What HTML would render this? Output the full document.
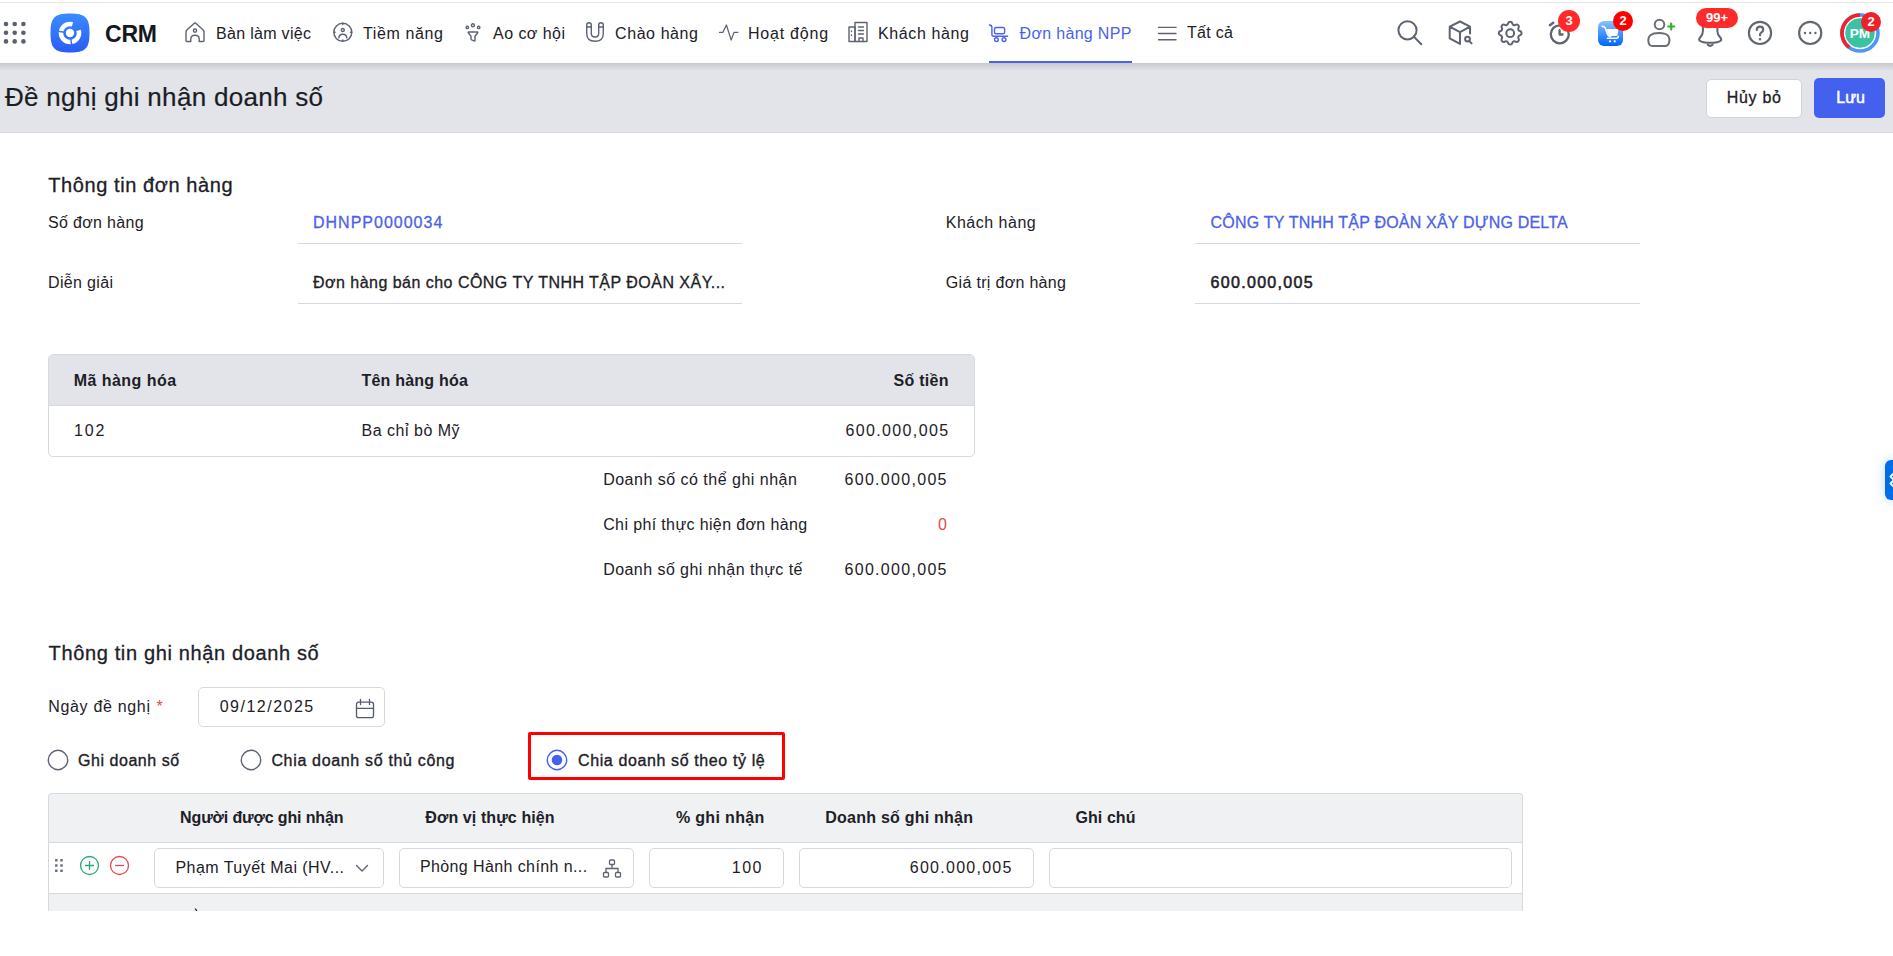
<!DOCTYPE html><html><head><meta charset="utf-8"><style>
html,body{margin:0;padding:0;width:1893px;height:956px;overflow:hidden;background:#fff;}
body{position:relative;font-family:"Liberation Sans",sans-serif;}
.t{position:absolute;white-space:nowrap;line-height:1;}
</style></head><body>
<div style="position:absolute;left:0px;top:2px;width:1893px;height:1px;background:#e2e5e2"></div>
<div style="position:absolute;left:0px;top:63px;width:1893px;height:70px;background:#e3e4e9"></div>
<div style="position:absolute;left:0px;top:63px;width:1893px;height:8px;background:linear-gradient(#c6c8ce,#e3e4e9)"></div>
<div style="position:absolute;left:0px;top:132px;width:1893px;height:1px;background:#d3d7df"></div>
<svg style="position:absolute;left:0px;top:0px" width="40" height="60" viewBox="0 0 40 60" fill="none"><circle cx="6.0" cy="24.0" r="2.3" fill="#5a6070"/><circle cx="6.0" cy="32.7" r="2.3" fill="#5a6070"/><circle cx="6.0" cy="41.4" r="2.3" fill="#5a6070"/><circle cx="14.7" cy="24.0" r="2.3" fill="#5a6070"/><circle cx="14.7" cy="32.7" r="2.3" fill="#5a6070"/><circle cx="14.7" cy="41.4" r="2.3" fill="#5a6070"/><circle cx="23.4" cy="24.0" r="2.3" fill="#5a6070"/><circle cx="23.4" cy="32.7" r="2.3" fill="#5a6070"/><circle cx="23.4" cy="41.4" r="2.3" fill="#5a6070"/></svg>
<svg style="position:absolute;left:50px;top:13px" width="40" height="40" viewBox="0 0 40 40" fill="none"><defs><linearGradient id="lg" x1="0" y1="0" x2="0" y2="1"><stop offset="0" stop-color="#3a8cff"/><stop offset="1" stop-color="#2a5cf6"/></linearGradient>
<mask id="lm" maskUnits="userSpaceOnUse" x="0" y="0" width="40" height="40"><rect width="40" height="40" fill="#fff"/>
<path d="M20 20 L4.16 17.77" stroke="#000" stroke-width="1.4"/><path d="M20 20 L22.23 35.84" stroke="#000" stroke-width="1.4"/>
<path d="M20 20 L24.4 4.5 L35.5 15.2 Z" fill="#000"/></mask></defs>
<path d="M20 0.5 C35.5 0.5 39.5 4.5 39.5 20 C39.5 35.5 35.5 39.5 20 39.5 C4.5 39.5 0.5 35.5 0.5 20 C0.5 4.5 4.5 0.5 20 0.5 Z" fill="url(#lg)"/>
<circle cx="20" cy="20" r="9.05" stroke="#fff" stroke-width="4.5" mask="url(#lm)"/>
<circle cx="20" cy="20" r="4.2" fill="#fff"/></svg>
<div class="t" style="left:105.00px;top:23px;font-size:23px;color:#151820;letter-spacing:-0.200px;font-weight:700;">CRM</div>
<div class="t" style="left:216.00px;top:26px;font-size:16px;color:#1d2027;letter-spacing:0.309px;">Bàn làm việc</div>
<div class="t" style="left:363.00px;top:26px;font-size:16px;color:#1d2027;letter-spacing:0.625px;">Tiềm năng</div>
<div class="t" style="left:493.00px;top:26px;font-size:16px;color:#1d2027;letter-spacing:0.463px;">Ao cơ hội</div>
<div class="t" style="left:615.00px;top:26px;font-size:16px;color:#1d2027;letter-spacing:0.588px;">Chào hàng</div>
<div class="t" style="left:748.00px;top:26px;font-size:16px;color:#1d2027;letter-spacing:0.775px;">Hoạt động</div>
<div class="t" style="left:878.00px;top:26px;font-size:16px;color:#1d2027;letter-spacing:0.622px;">Khách hàng</div>
<div class="t" style="left:1019.60px;top:26px;font-size:16px;color:#4a62e8;letter-spacing:0.309px;">Đơn hàng NPP</div>
<div class="t" style="left:1187.00px;top:25px;font-size:16px;color:#1d2027;letter-spacing:0.300px;">Tất cả</div>
<div style="position:absolute;left:989px;top:61px;width:143px;height:2px;background:#4a62e8"></div>
<svg style="position:absolute;left:184px;top:21px" width="22" height="22" viewBox="0 0 22 22" fill="none"><path d="M2 19.5 V10.8 Q2 9.8 2.8 9.1 L10 2.4 Q11 1.6 12 2.4 L19.2 9.1 Q20 9.8 20 10.8 V19.5 Q20 20.5 19 20.5 H15.2 V18 Q15.2 14.2 11 14.2 Q6.8 14.2 6.8 18 V20.5 H3 Q2 20.5 2 19.5Z" stroke="#5d6373" stroke-width="1.4" stroke-linecap="round" stroke-linejoin="round"/><circle cx="11" cy="9.6" r="1.6" stroke="#5d6373" stroke-width="1.4" stroke-linecap="round" stroke-linejoin="round"/></svg>
<svg style="position:absolute;left:332px;top:22px" width="21" height="21" viewBox="0 0 21 21" fill="none"><circle cx="10.8" cy="10.3" r="9" stroke="#5d6373" stroke-width="1.4" stroke-linecap="round" stroke-linejoin="round"/><circle cx="10.8" cy="8" r="1.5" stroke="#5d6373" stroke-width="1.4" stroke-linecap="round" stroke-linejoin="round"/><path d="M6.8 15.8 Q7.3 12.2 10.8 12.2 Q14.3 12.2 14.8 15.8" stroke="#5d6373" stroke-width="1.4" stroke-linecap="round" stroke-linejoin="round"/><path d="M10.8 1.3V2.6M10.8 18V19.3M1.8 10.3H3.1M18.5 10.3H19.8" stroke="#5d6373" stroke-width="1.4" stroke-linecap="round" stroke-linejoin="round"/></svg>
<svg style="position:absolute;left:464px;top:21px" width="20" height="22" viewBox="0 0 20 22" fill="none"><circle cx="3.3" cy="6.4" r="1.2" stroke="#5d6373" stroke-width="1.4" stroke-linecap="round" stroke-linejoin="round"/><circle cx="8.9" cy="4.3" r="1.5" stroke="#5d6373" stroke-width="1.4" stroke-linecap="round" stroke-linejoin="round"/><circle cx="14.7" cy="6.4" r="1.2" stroke="#5d6373" stroke-width="1.4" stroke-linecap="round" stroke-linejoin="round"/><path d="M4.6 11 H13.4 Q14.2 11 13.7 11.7 L11 15.2 V19.3 Q11 20.2 10.2 19.9 L7.6 18.8 Q7 18.5 7 17.8 V15.2 L4.3 11.7 Q3.8 11 4.6 11 Z" stroke="#5d6373" stroke-width="1.4" stroke-linecap="round" stroke-linejoin="round"/></svg>
<svg style="position:absolute;left:585px;top:21px" width="20" height="22" viewBox="0 0 20 22" fill="none"><path d="M1.7 4 Q1.7 1.7 4 1.7 Q6.3 1.7 6.3 4 V12.5 Q6.3 16 10 16 Q13.7 16 13.7 12.5 V4 Q13.7 1.7 16 1.7 Q18.3 1.7 18.3 4 V12.5 Q18.3 20.3 10 20.3 Q1.7 20.3 1.7 12.5 Z" stroke="#5d6373" stroke-width="1.4" stroke-linecap="round" stroke-linejoin="round"/><path d="M1.7 6H6.3M13.7 6H18.3" stroke="#5d6373" stroke-width="1.4" stroke-linecap="round" stroke-linejoin="round"/></svg>
<svg style="position:absolute;left:718px;top:24px" width="22" height="18" viewBox="0 0 22 18" fill="none"><path d="M1.5 8.4 H4.8 L8.4 1 L13.2 16 L16 8.4 H19.8" stroke="#5d6373" stroke-width="1.25" stroke-linecap="round" stroke-linejoin="round"/></svg>
<svg style="position:absolute;left:847px;top:21px" width="22" height="22" viewBox="0 0 22 22" fill="none"><rect x="2" y="6" width="6" height="14.5" stroke="#5d6373" stroke-width="1.4" stroke-linecap="round" stroke-linejoin="round"/><rect x="8" y="1.5" width="12" height="19" stroke="#5d6373" stroke-width="1.4" stroke-linecap="round" stroke-linejoin="round"/><path d="M11.5 6H16.5M11.5 9.5H16.5M11.5 13H16.5M4.5 10V10.5M4.5 14V14.5M12 20.5V17H16V20.5" stroke="#5d6373" stroke-width="1.4" stroke-linecap="round" stroke-linejoin="round"/></svg>
<svg style="position:absolute;left:988px;top:23px" width="22" height="20" viewBox="0 0 22 20" fill="none"><path d="M1.4 2 Q3.9 2 3.9 4.5 V11.2 Q3.9 13.2 5.9 13.2 H19.6" stroke="#4a62e8" stroke-width="1.4" stroke-linecap="round" stroke-linejoin="round"/><rect x="6.5" y="4.5" width="10.1" height="6.2" rx="1.5" stroke="#4a62e8" stroke-width="1.4" stroke-linecap="round" stroke-linejoin="round"/><circle cx="8.4" cy="16.6" r="1.9" stroke="#4a62e8" stroke-width="1.4" stroke-linecap="round" stroke-linejoin="round"/><circle cx="16" cy="16.6" r="1.9" stroke="#4a62e8" stroke-width="1.4" stroke-linecap="round" stroke-linejoin="round"/></svg>
<svg style="position:absolute;left:1157px;top:24px" width="21" height="18" viewBox="0 0 21 18" fill="none"><path d="M1.5 3.4H19M1.5 9.5H19M1.5 15.8H19" stroke="#5d6373" stroke-width="1.4" stroke-linecap="round" stroke-linejoin="round"/></svg>
<svg style="position:absolute;left:1394px;top:17px" width="32" height="32" viewBox="0 0 32 32" fill="none"><circle cx="13.5" cy="13.3" r="9.1" stroke="#5d6373" stroke-width="2" stroke-linecap="round" stroke-linejoin="round"/><path d="M19.8 19.6 L27.3 27.3" stroke="#5d6373" stroke-width="2" stroke-linecap="round" stroke-linejoin="round"/></svg>
<svg style="position:absolute;left:1446px;top:18px" width="30" height="30" viewBox="0 0 30 30" fill="none"><path d="M14 3.5 L24 8.7 V15.4 M14 3.5 L3.7 8.7 V20.4 L14 25.9 M3.7 8.7 L14 14.2 L24 8.7 M14 14.2 V25.9" stroke="#5d6373" stroke-width="2" stroke-linecap="round" stroke-linejoin="round"/><circle cx="21.5" cy="21.1" r="2.4" stroke="#5d6373" stroke-width="2" stroke-linecap="round" stroke-linejoin="round"/><path d="M23.4 23.2 L25.6 25.4" stroke="#5d6373" stroke-width="2" stroke-linecap="round" stroke-linejoin="round"/></svg>
<svg style="position:absolute;left:1494.7px;top:17.7px" width="30.4" height="30.4" viewBox="0 0 24 24" fill="none"><path d="M10.325 4.317c.426 -1.756 2.924 -1.756 3.35 0a1.724 1.724 0 0 0 2.573 1.066c1.543 -.94 3.31 .826 2.37 2.37a1.724 1.724 0 0 0 1.065 2.572c1.756 .426 1.756 2.924 0 3.35a1.724 1.724 0 0 0 -1.066 2.573c.94 1.543 -.826 3.31 -2.37 2.37a1.724 1.724 0 0 0 -2.572 1.065c-.426 1.756 -2.924 1.756 -3.35 0a1.724 1.724 0 0 0 -2.573 -1.066c-1.543 .94 -3.31 -.826 -2.37 -2.37a1.724 1.724 0 0 0 -1.065 -2.572c-1.756 -.426 -1.756 -2.924 0 -3.35a1.724 1.724 0 0 0 1.066 -2.573c-.94 -1.543 .826 -3.31 2.37 -2.37c1 .608 2.296 .07 2.572 -1.065z" stroke="#5d6373" stroke-width="1.6" stroke-linejoin="round"/><circle cx="12" cy="12" r="3.05" stroke="#5d6373" stroke-width="1.6"/></svg>
<svg style="position:absolute;left:1546px;top:18px" width="28" height="30" viewBox="0 0 28 30" fill="none"><circle cx="13.8" cy="16.3" r="9" stroke="#5d6373" stroke-width="2.3"/><path d="M13.6 12.2 V16.5 H16.6" stroke="#5d6373" stroke-width="2.3" stroke-linecap="round" stroke-linejoin="round"/><path d="M3.8 7.2 L7.3 4.7" stroke="#5d6373" stroke-width="2.3" stroke-linecap="round"/></svg>
<div style="position:absolute;left:1558px;top:10px;width:22px;height:22px;border-radius:11px;background:#ff2b2b;color:#fff;font:700 13px/22px 'Liberation Sans',sans-serif;text-align:center">3</div>
<svg style="position:absolute;left:1598px;top:21px" width="25" height="25" viewBox="0 0 25 25" fill="none"><defs><linearGradient id="cg" x1="0" y1="0" x2="0" y2="1"><stop offset="0" stop-color="#8cc2ff"/><stop offset="1" stop-color="#0064fa"/></linearGradient></defs>
<rect width="25" height="25" rx="6" fill="url(#cg)"/>
<path d="M8.6 8 H20.4 L19.6 14.2 Q19.5 15 18.7 15 H11.5 Q10.8 15 10.6 14.3 Z" fill="#fff"/>
<path d="M4.2 5.4 Q6.5 5.2 7.4 7.3 L9.5 13 Q10.3 15.4 12.5 15.4 M9.5 17.2 H18.8 Q20.4 17.2 20.4 15.6" stroke="#fff" stroke-width="1.6" stroke-linecap="round" stroke-linejoin="round" fill="none"/>
<circle cx="12" cy="20.3" r="1.15" fill="#fff"/><circle cx="16.7" cy="20.3" r="1.15" fill="#fff"/></svg>
<div style="position:absolute;left:1613px;top:11px;width:20px;height:20px;border-radius:10px;background:#ff0000;color:#fff;font:700 13px/20px 'Liberation Sans',sans-serif;text-align:center">2</div>
<svg style="position:absolute;left:1646px;top:17px" width="32" height="32" viewBox="0 0 32 32" fill="none"><circle cx="13.5" cy="7.5" r="4.8" stroke="#6b6e72" stroke-width="2"/><path d="M2.5 25 Q1 16 13.2 16 Q24.8 16 23.2 25 Q22.5 29 19 29 H6.5 Q3 29 2.5 25 Z" stroke="#6b6e72" stroke-width="2" stroke-linejoin="round"/><path d="M25.2 6.5 V12.5 M22.2 9.5 H28.2" stroke="#2ab52a" stroke-width="2.2" stroke-linecap="round"/></svg>
<svg style="position:absolute;left:1696px;top:20px" width="28" height="30" viewBox="0 0 28 30" fill="none"><path d="M6.9 6 V11 Q6.9 14.5 4.5 17 Q2.5 19 3.5 20.5 Q6 22.8 14.2 22.8 Q22.4 22.8 24.9 20.5 Q25.9 19 23.9 17 Q21.4 14.5 21.4 11 V6" stroke="#5d6373" stroke-width="2" stroke-linecap="round" stroke-linejoin="round"/><path d="M11.8 24.8 Q14.2 27 16.6 24.8" stroke="#5d6373" stroke-width="2" stroke-linecap="round" stroke-linejoin="round"/></svg>
<div style="position:absolute;left:1696px;top:8px;width:42px;height:20px;border-radius:10px;background:#ff2b2b;color:#fff;font:700 13px/20px 'Liberation Sans',sans-serif;text-align:center">99+</div>
<svg style="position:absolute;left:1746px;top:19px" width="28" height="28" viewBox="0 0 28 28" fill="none"><circle cx="14" cy="13.9" r="11.1" stroke="#62686f" stroke-width="2.2" stroke-linecap="round" stroke-linejoin="round"/><path d="M10.8 11 Q10.8 7.6 14 7.6 Q17.2 7.6 17.2 10.6 Q17.2 12.4 15.4 13.4 Q14 14.2 14 16.3" stroke="#62686f" stroke-width="2.2" stroke-linecap="round" stroke-linejoin="round"/><circle cx="14" cy="20.2" r="0.5" fill="#62686f" stroke="#62686f" stroke-width="1.6"/></svg>
<svg style="position:absolute;left:1796px;top:19px" width="28" height="28" viewBox="0 0 28 28" fill="none"><circle cx="14.2" cy="13.9" r="11.1" stroke="#62686f" stroke-width="2.2" stroke-linecap="round" stroke-linejoin="round"/><circle cx="9" cy="14" r="1.2" fill="#62686f"/><circle cx="14.2" cy="14" r="1.2" fill="#62686f"/><circle cx="19.4" cy="14" r="1.2" fill="#62686f"/></svg>
<svg style="position:absolute;left:1839px;top:12px" width="42" height="42" viewBox="0 0 42 42" fill="none"><circle cx="21" cy="21" r="18" stroke="#4a97f7" stroke-width="3.6"/>
<path d="M21 3 A18 18 0 0 0 10.3 35.5" stroke="#f0232c" stroke-width="3.6"/>
<circle cx="21" cy="21" r="15.3" fill="#3cc2a2" stroke="#fff" stroke-width="0.9"/>
<text x="20.9" y="26.1" text-anchor="middle" font-family="Liberation Sans" font-weight="700" font-size="13.5" fill="#fff">PM</text></svg>
<div style="position:absolute;left:1861px;top:12px;width:20px;height:20px;border-radius:10px;background:#f0202a;color:#fff;font:700 13px/20px 'Liberation Sans',sans-serif;text-align:center">2</div>
<div class="t" style="left:5.00px;top:84px;font-size:26px;color:#1a1d24;letter-spacing:0.300px;-webkit-text-stroke:0.2px #1a1d24;">Đề nghị ghi nhận doanh số</div>
<div style="position:absolute;left:1706px;top:78.5px;width:96px;height:39px;background:#fff;border:1px solid #d0d3d9;border-radius:5px;box-sizing:border-box;"></div>
<div class="t" style="left:1726.70px;top:90px;font-size:16px;color:#1d2027;letter-spacing:0.720px;-webkit-text-stroke:0.3px #1d2027;">Hủy bỏ</div>
<div style="position:absolute;left:1814px;top:78px;width:71px;height:40px;background:#4361ee;border-radius:5px;"></div>
<div class="t" style="left:1836.30px;top:90px;font-size:16px;color:#fff;letter-spacing:0.000px;-webkit-text-stroke:0.5px #fff;">Lưu</div>
<div class="t" style="left:48.20px;top:175px;font-size:20px;color:#1d2027;letter-spacing:0.588px;-webkit-text-stroke:0.3px #1d2027;">Thông tin đơn hàng</div>
<div class="t" style="left:48.00px;top:215px;font-size:16px;color:#1d2027;letter-spacing:0.320px;">Số đơn hàng</div>
<div class="t" style="left:313.00px;top:215px;font-size:16px;color:#4a62e8;letter-spacing:1.000px;-webkit-text-stroke:0.3px #4a62e8;">DHNPP0000034</div>
<div style="position:absolute;left:298px;top:243px;width:444px;height:1px;background:#d6d9e0"></div>
<div class="t" style="left:48.00px;top:275px;font-size:16px;color:#1d2027;letter-spacing:0.338px;">Diễn giải</div>
<div class="t" style="left:313.00px;top:275px;font-size:16px;color:#1d2027;letter-spacing:0.475px;-webkit-text-stroke:0.3px #1d2027;">Đơn hàng bán cho CÔNG TY TNHH TẬP ĐOÀN XÂY...</div>
<div style="position:absolute;left:298px;top:303px;width:444px;height:1px;background:#d6d9e0"></div>
<div class="t" style="left:945.80px;top:215px;font-size:16px;color:#1d2027;letter-spacing:0.500px;">Khách hàng</div>
<div class="t" style="left:1210.60px;top:215px;font-size:16px;color:#4a62e8;letter-spacing:0.203px;-webkit-text-stroke:0.3px #4a62e8;">CÔNG TY TNHH TẬP ĐOÀN XÂY DỰNG DELTA</div>
<div style="position:absolute;left:1195px;top:243px;width:445px;height:1px;background:#d6d9e0"></div>
<div class="t" style="left:945.80px;top:275px;font-size:16px;color:#1d2027;letter-spacing:0.313px;">Giá trị đơn hàng</div>
<div class="t" style="left:1210.60px;top:275px;font-size:16px;color:#1d2027;letter-spacing:1.300px;-webkit-text-stroke:0.55px #1d2027;">600.000,005</div>
<div style="position:absolute;left:1195px;top:303px;width:445px;height:1px;background:#d6d9e0"></div>
<div style="position:absolute;left:48px;top:354px;width:927px;height:103px;border:1px solid #d6d9e0;border-radius:5px;box-sizing:border-box;overflow:hidden;background:#fff"></div>
<div style="position:absolute;left:49px;top:355px;width:925px;height:50px;background:#e3e4e9;border-radius:4px 4px 0 0"></div>
<div style="position:absolute;left:49px;top:405px;width:925px;height:1px;background:#d6d9e0"></div>
<div class="t" style="left:73.70px;top:373px;font-size:16px;color:#1d2027;letter-spacing:0.460px;font-weight:700;">Mã hàng hóa</div>
<div class="t" style="left:361.50px;top:373px;font-size:16px;color:#1d2027;letter-spacing:0.218px;font-weight:700;">Tên hàng hóa</div>
<div class="t" style="left:893.60px;top:373px;font-size:16px;color:#1d2027;letter-spacing:0.250px;font-weight:700;">Số tiền</div>
<div class="t" style="left:74.00px;top:423px;font-size:16px;color:#1d2027;letter-spacing:1.900px;">102</div>
<div class="t" style="left:361.50px;top:423px;font-size:16px;color:#1d2027;letter-spacing:0.509px;">Ba chỉ bò Mỹ</div>
<div class="t" style="left:845.50px;top:423px;font-size:16px;color:#1d2027;letter-spacing:1.360px;">600.000,005</div>
<div class="t" style="left:603.20px;top:472px;font-size:16px;color:#1d2027;letter-spacing:0.491px;">Doanh số có thể ghi nhận</div>
<div class="t" style="left:844.50px;top:472px;font-size:16px;color:#1d2027;letter-spacing:1.300px;">600.000,005</div>
<div class="t" style="left:603.20px;top:517px;font-size:16px;color:#1d2027;letter-spacing:0.372px;">Chi phí thực hiện đơn hàng</div>
<div class="t" style="left:938.00px;top:517px;font-size:16px;color:#e5484d;letter-spacing:0.000px;">0</div>
<div class="t" style="left:603.20px;top:562px;font-size:16px;color:#1d2027;letter-spacing:0.442px;">Doanh số ghi nhận thực tế</div>
<div class="t" style="left:844.50px;top:562px;font-size:16px;color:#1d2027;letter-spacing:1.300px;">600.000,005</div>
<div class="t" style="left:48.60px;top:643px;font-size:20px;color:#1d2027;letter-spacing:0.635px;-webkit-text-stroke:0.3px #1d2027;">Thông tin ghi nhận doanh số</div>
<div class="t" style="left:48.20px;top:699px;font-size:16px;color:#1d2027;letter-spacing:0.682px;">Ngày đề nghị</div>
<div class="t" style="left:156.40px;top:699px;font-size:16px;color:#e5484d;letter-spacing:0.000px;">*</div>
<div style="position:absolute;left:198px;top:687px;width:187px;height:40px;border:1px solid #d6d9e0;border-radius:5px;box-sizing:border-box;background:#fff"></div>
<div class="t" style="left:219.70px;top:699px;font-size:16px;color:#1d2027;letter-spacing:1.500px;">09/12/2025</div>
<svg style="position:absolute;left:355px;top:698px" width="20" height="21" viewBox="0 0 20 21" fill="none"><rect x="1.5" y="4.1" width="17" height="15.5" rx="2.2" stroke="#525a6e" stroke-width="1.3"/><path d="M1.5 10.4H18.5M5.5 1.5V6.5M14.5 1.5V6.5" stroke="#525a6e" stroke-width="1.3" stroke-linecap="round"/></svg>
<svg style="position:absolute;left:47px;top:749px" width="22" height="22" viewBox="0 0 22 22" fill="none"><circle cx="11" cy="11" r="9.7" stroke="#5d6373" stroke-width="1.4" fill="#fff"/></svg>
<div class="t" style="left:78.00px;top:753px;font-size:16px;color:#1d2027;letter-spacing:0.545px;-webkit-text-stroke:0.35px #1d2027;">Ghi doanh số</div>
<svg style="position:absolute;left:240px;top:749px" width="22" height="22" viewBox="0 0 22 22" fill="none"><circle cx="11" cy="11" r="9.7" stroke="#5d6373" stroke-width="1.4" fill="#fff"/></svg>
<div class="t" style="left:271.40px;top:753px;font-size:16px;color:#1d2027;letter-spacing:0.671px;-webkit-text-stroke:0.35px #1d2027;">Chia doanh số thủ công</div>
<div style="position:absolute;left:528px;top:732px;width:257px;height:48px;border:3px solid #ff0000;border-radius:2px;box-sizing:border-box"></div>
<svg style="position:absolute;left:546px;top:749px" width="22" height="22" viewBox="0 0 22 22" fill="none"><circle cx="11" cy="11" r="9.7" stroke="#4361ee" stroke-width="1.4" fill="#fff"/><circle cx="11" cy="11" r="5.3" fill="#4361ee"/></svg>
<div class="t" style="left:578.00px;top:753px;font-size:16px;color:#1d2027;letter-spacing:0.617px;-webkit-text-stroke:0.35px #1d2027;">Chia doanh số theo tỷ lệ</div>
<div style="position:absolute;left:48px;top:793px;width:1475px;height:118px;border:1px solid #d6d9e0;border-bottom:none;border-radius:4px 4px 0 0;box-sizing:border-box;background:#f0f1f3"></div>
<div style="position:absolute;left:49px;top:842px;width:1473px;height:1px;background:#d6d9e0"></div>
<div style="position:absolute;left:49px;top:843px;width:1473px;height:50px;background:#fff"></div>
<div style="position:absolute;left:49px;top:893px;width:1473px;height:1px;background:#d6d9e0"></div>
<div class="t" style="left:180.10px;top:810px;font-size:16px;color:#1d2027;letter-spacing:-0.139px;font-weight:700;">Người được ghi nhận</div>
<div class="t" style="left:425.30px;top:810px;font-size:16px;color:#1d2027;letter-spacing:0.093px;font-weight:700;">Đơn vị thực hiện</div>
<div class="t" style="left:675.90px;top:810px;font-size:16px;color:#1d2027;letter-spacing:0.344px;font-weight:700;">% ghi nhận</div>
<div class="t" style="left:825.30px;top:810px;font-size:16px;color:#1d2027;letter-spacing:0.231px;font-weight:700;">Doanh số ghi nhận</div>
<div class="t" style="left:1075.50px;top:810px;font-size:16px;color:#1d2027;letter-spacing:0.067px;font-weight:700;">Ghi chú</div>
<svg style="position:absolute;left:54px;top:858px" width="10" height="15" viewBox="0 0 10 15" fill="none"><rect x="1.0" y="1.0" width="2.6" height="2.6" rx="0.6" fill="#6b7182"/><rect x="1.0" y="6.2" width="2.6" height="2.6" rx="0.6" fill="#6b7182"/><rect x="1.0" y="11.4" width="2.6" height="2.6" rx="0.6" fill="#6b7182"/><rect x="6.2" y="1.0" width="2.6" height="2.6" rx="0.6" fill="#6b7182"/><rect x="6.2" y="6.2" width="2.6" height="2.6" rx="0.6" fill="#6b7182"/><rect x="6.2" y="11.4" width="2.6" height="2.6" rx="0.6" fill="#6b7182"/></svg>
<svg style="position:absolute;left:79px;top:855px" width="21" height="21" viewBox="0 0 21 21" fill="none"><circle cx="10.5" cy="10.5" r="9" stroke="#2aa876" stroke-width="1.3"/><path d="M10.5 6V15M6 10.5H15" stroke="#2aa876" stroke-width="1.3"/></svg>
<svg style="position:absolute;left:109px;top:855px" width="21" height="21" viewBox="0 0 21 21" fill="none"><circle cx="10.5" cy="10.5" r="9" stroke="#e5484d" stroke-width="1.3"/><path d="M6 10.5H15" stroke="#e5484d" stroke-width="1.3"/></svg>
<div style="position:absolute;left:154px;top:848px;width:230px;height:40px;border:1px solid #d6d9e0;border-radius:5px;box-sizing:border-box;background:#fff"></div>
<div style="position:absolute;left:399px;top:848px;width:235px;height:40px;border:1px solid #d6d9e0;border-radius:5px;box-sizing:border-box;background:#fff"></div>
<div style="position:absolute;left:649px;top:848px;width:135px;height:40px;border:1px solid #d6d9e0;border-radius:5px;box-sizing:border-box;background:#fff"></div>
<div style="position:absolute;left:799px;top:848px;width:235px;height:40px;border:1px solid #d6d9e0;border-radius:5px;box-sizing:border-box;background:#fff"></div>
<div style="position:absolute;left:1049px;top:848px;width:463px;height:40px;border:1px solid #d6d9e0;border-radius:5px;box-sizing:border-box;background:#fff"></div>
<div class="t" style="left:175.50px;top:860px;font-size:16px;color:#1d2027;letter-spacing:0.450px;">Phạm Tuyết Mai (HV...</div>
<svg style="position:absolute;left:354px;top:862px" width="16" height="12" viewBox="0 0 16 12" fill="none"><path d="M2.5 3.5 L8 9 L13.5 3.5" stroke="#5d6373" stroke-width="1.4" stroke-linecap="round" stroke-linejoin="round"/></svg>
<div class="t" style="left:419.90px;top:859px;font-size:16px;color:#1d2027;letter-spacing:0.400px;">Phòng Hành chính n...</div>
<svg style="position:absolute;left:602px;top:859px" width="21" height="20" viewBox="0 0 21 20" fill="none"><rect x="7.5" y="1" width="5" height="4.5" rx="1" stroke="#5d6373" stroke-width="1.3"/><rect x="1.5" y="13.5" width="5" height="4.5" rx="1" stroke="#5d6373" stroke-width="1.3"/><rect x="13.5" y="13.5" width="5" height="4.5" rx="1" stroke="#5d6373" stroke-width="1.3"/><path d="M10 5.5V9.5M4 13.5V9.5H16V13.5" stroke="#5d6373" stroke-width="1.3"/></svg>
<div class="t" style="left:731.80px;top:860px;font-size:16px;color:#1d2027;letter-spacing:1.500px;">100</div>
<div class="t" style="left:909.80px;top:860px;font-size:16px;color:#1d2027;letter-spacing:1.260px;">600.000,005</div>
<div style="position:absolute;left:1885px;top:460px;width:16px;height:40px;background:#016de8;border-radius:6px 0 0 6px;box-shadow:0 0 12px rgba(11,107,232,0.25)"></div>
<svg style="position:absolute;left:1885px;top:460px" width="8" height="40" viewBox="0 0 8 40" fill="none"><path d="M8 14 L5.5 16.5 L8 19 M8 21 L5.5 23.5 L8 26" stroke="#fff" stroke-width="1.8" stroke-linecap="round" stroke-linejoin="round"/></svg>
<svg style="position:absolute;left:194px;top:908px" width="4" height="3" viewBox="0 0 4 3" fill="none"><path d="M0.6 0.5 L2 0.5 L3.4 3 L2 3 Z" fill="#1d2027"/></svg>
</body></html>
